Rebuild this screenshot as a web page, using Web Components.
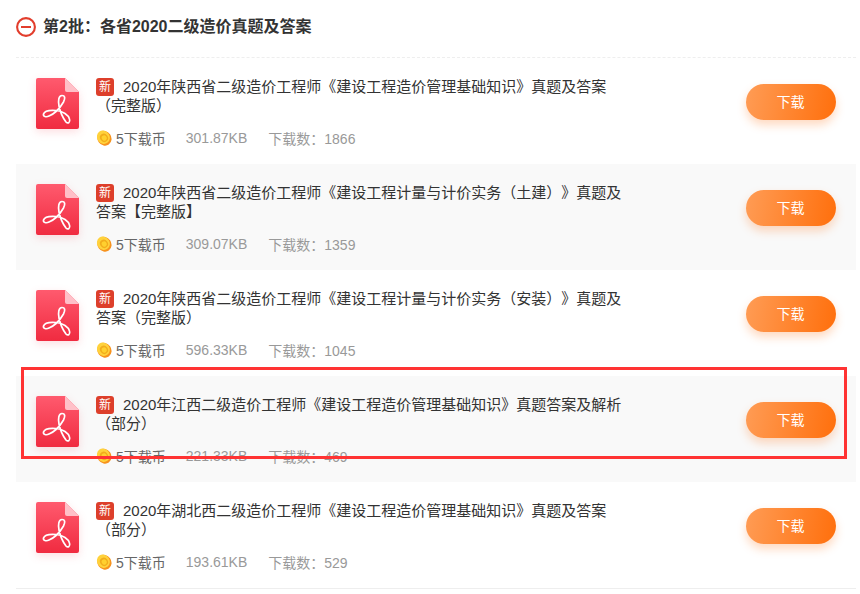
<!DOCTYPE html>
<html lang="zh-CN">
<head>
<meta charset="utf-8">
<title>第2批</title>
<style>
  html, body { margin: 0; background: #fff; }
  body { font-family: "Liberation Sans", "Noto Sans CJK SC", sans-serif; text-spacing-trim: space-all; }
</style>
</head>
<body>
<batch-list>
  <batch-header>第2批：各省2020二级造价真题及答案</batch-header>
  <doc-row size="301.87KB" count="1866">2020年陕西省二级造价工程师《建设工程造价管理基础知识》真题及答案（完整版）</doc-row>
  <doc-row size="309.07KB" count="1359" shaded>2020年陕西省二级造价工程师《建设工程计量与计价实务（土建）》真题及答案【完整版】</doc-row>
  <doc-row size="596.33KB" count="1045">2020年陕西省二级造价工程师《建设工程计量与计价实务（安装）》真题及答案（完整版）</doc-row>
  <doc-row size="221.33KB" count="469" shaded>2020年江西二级造价工程师《建设工程造价管理基础知识》真题答案及解析（部分）</doc-row>
  <doc-row size="193.61KB" count="529" last>2020年湖北西二级造价工程师《建设工程造价管理基础知识》真题及答案（部分）</doc-row>
  <mark-box></mark-box>
</batch-list>

<script>
class BatchList extends HTMLElement {
  constructor() {
    super();
    this.attachShadow({ mode: 'open' });
    this.shadowRoot.innerHTML = `
      <style>
        :host {
          display: block;
          position: relative;
          height: 594px;
          padding: 0 4px 0 16px;
          box-sizing: border-box;
          overflow: hidden;
        }
      </style>
      <slot></slot>
    `;
  }
}

class BatchHeader extends HTMLElement {
  constructor() {
    super();
    this.attachShadow({ mode: 'open' });
    this.shadowRoot.innerHTML = `
      <style>
        :host {
          display: flex;
          align-items: flex-start;
          gap: 7px;
          height: 58px;
          box-sizing: border-box;
          padding-top: 17px;
          border-bottom: 1px dashed #eee;
          font-size: 16px;
          font-weight: bold;
          color: #333;
        }
        svg { display: block; flex: none; }
        span { line-height: 19px; }
      </style>
      <svg width="20" height="20" viewBox="0 0 20 20">
        <circle cx="10" cy="10" r="8.9" fill="none" stroke="#e23d2c" stroke-width="2.1"/>
        <rect x="5" y="9" width="10" height="2" fill="#e23d2c"/>
      </svg>
      <span><slot></slot></span>
    `;
  }
}

class DocRow extends HTMLElement {
  constructor() {
    super();
    this.attachShadow({ mode: 'open' });
  }

  connectedCallback() {
    const size = this.getAttribute('size');
    const count = this.getAttribute('count');
    const id = 'g' + Math.random().toString(36).slice(2);
    this.shadowRoot.innerHTML = `
      <style>
        :host {
          display: flex;
          align-items: flex-start;
          height: 106px;
          box-sizing: border-box;
          padding: 20px 20px 0 20px;
          color: #333;
        }
        :host([shaded]) { background: #f9f9f9; }
        :host([last]) { height: 107px; border-bottom: 1px solid #eee; }
        .file {
          display: block;
          flex: none;
          margin-right: 17px;
          filter: drop-shadow(0 3px 4px rgba(240, 50, 70, .16));
        }
        .body { width: 530px; margin-top: -1px; }
        .title {
          font-size: 15px;
          line-height: 19px;
          min-height: 38px;
          margin: 0;
        }
        .tag {
          display: inline-block;
          width: 18px;
          height: 18px;
          line-height: 18px;
          margin: 1px 9px 0 0;
          border-radius: 3px;
          background: #dd3f2b;
          color: #fff;
          font-size: 12px;
          text-align: center;
          vertical-align: top;
        }
        .meta {
          display: flex;
          align-items: center;
          height: 20px;
          margin-top: 13px;
          font-size: 14px;
          color: #999;
        }
        .coin { display: block; flex: none; margin-right: 4px; }
        .price { color: #666; margin-right: 20px; }
        .size { margin-right: 21px; }
        .btn {
          flex: none;
          width: 90px;
          height: 36px;
          margin: 6px 0 0 auto;
          border: 0;
          padding: 0 1px 0 0;
          border-radius: 18px;
          background: linear-gradient(100deg, #ff9c55, #ff6f0c);
          box-shadow: 0 5px 10px rgba(255, 120, 30, .28);
          color: #fff;
          font: inherit;
          font-size: 14px;
          line-height: 36px;
          text-align: center;
        }
      </style>
      <svg class="file" width="43" height="51" viewBox="0 0 43 51">
        <defs>
          <linearGradient id="${id}" x1="0" y1="0" x2="0" y2="1">
            <stop offset="0" stop-color="#ff5a6e"/>
            <stop offset="1" stop-color="#f02b40"/>
          </linearGradient>
        </defs>
        <path d="M2 0H29L43 14V49a2 2 0 0 1-2 2H2a2 2 0 0 1-2-2V2a2 2 0 0 1 2-2Z" fill="url(#${id})"/>
        <path d="M29 0L43 14H31a2 2 0 0 1-2-2Z" fill="#ffc0c8"/>
        <path d="M26 17.5C22.5 17.5 22 23 23 28C24 33 27 40 30 44C32 46 34.5 44.5 33.5 41C32.5 37 27 33 20 32.5C14 32 8.5 33 7.5 36C7 38.5 10 39.5 13 38C18 36 24 30 27.5 24C29.5 20 29 17.5 26 17.5Z" fill="none" stroke="#fff" stroke-width="1.7" stroke-linejoin="round"/>
      </svg>
      <div class="body">
        <p class="title"><span class="tag">新</span><slot></slot></p>
        <div class="meta">
          <svg class="coin" width="16" height="16" viewBox="0 0 16 16">
            <ellipse cx="8.4" cy="8.2" rx="6.9" ry="7.7" transform="rotate(-35 8.4 8.2)" fill="#f7931e"/>
            <ellipse cx="7.4" cy="7.2" rx="6.2" ry="6.9" transform="rotate(-35 7.4 7.2)" fill="#ffd23c"/>
            <ellipse cx="8" cy="7.8" rx="3.9" ry="4.3" transform="rotate(-35 8 7.8)" fill="#f2ad1c"/>
            <ellipse cx="8.2" cy="8" rx="2.4" ry="2.7" transform="rotate(-35 8.2 8)" fill="#ffd02f"/>
          </svg>
          <span class="price">5下载币</span>
          <span class="size">${size}</span>
          <span>下载数：${count}</span>
        </div>
      </div>
      <button class="btn">下载</button>
    `;
  }
}

class MarkBox extends HTMLElement {
  constructor() {
    super();
    this.attachShadow({ mode: 'open' });
    this.shadowRoot.innerHTML = `
      <style>
        :host {
          position: absolute;
          left: 21px;
          top: 367px;
          width: 826px;
          height: 92px;
          box-sizing: border-box;
          border: 3px solid #f33;
          pointer-events: none;
        }
      </style>
    `;
  }
}

customElements.define('batch-list', BatchList);
customElements.define('batch-header', BatchHeader);
customElements.define('doc-row', DocRow);
customElements.define('mark-box', MarkBox);
</script>
</body>
</html>
